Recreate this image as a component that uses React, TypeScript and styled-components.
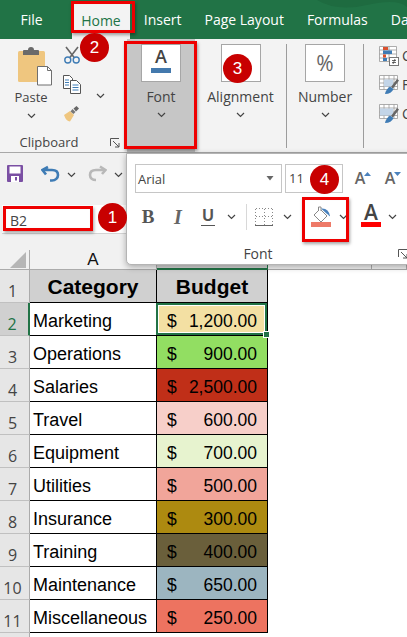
import React from "react";
import styled, { createGlobalStyle } from "styled-components";

const Global = createGlobalStyle`
  html, body { margin: 0; padding: 0; background: #fff; overflow: hidden; }
  * { box-sizing: border-box; }
`;

const UI = `"Open Sans", "Noto Sans", sans-serif`;
const ARIAL = `"Liberation Sans", Arial, sans-serif`;

const Page = styled.div`
  position: relative; width: 407px; height: 637px; overflow: hidden;
  display: flex; flex-direction: column; background: #f1f1f1; font-family: ${UI}; color: #444;
`;
const TabBar = styled.div`
  position: relative; height: 39px; flex: none; display: flex; background: #217346; padding: 0 0 0 9px; overflow: hidden;
`;
const Swoosh = styled.svg`position: absolute; right: 0; top: 0;`;
const Tab = styled.div<{ $active?: boolean }>`
  position: relative; flex: none; padding: ${p => (p.$active ? "0 9px" : "0 11.5px")}; margin: ${p => (p.$active ? "3px 2.5px 0 18px" : "0")};
  line-height: ${p => (p.$active ? "35px" : "40px")}; font-size: 14px; white-space: nowrap;
  color: ${p => (p.$active ? "#217346" : "#fff")}; background: ${p => (p.$active ? "#f3f3f3" : "transparent")};
`;
const Ribbon = styled.div`
  height: 114px; flex: none; display: flex; background: #f3f3f3; border-bottom: 1px solid #a8a8a8; overflow: hidden;
`;
const ClipboardGroup = styled.div`width: 127px; flex: none; display: flex; flex-direction: column;`;
const ClipboardTools = styled.div`display: flex; height: 94px;`;
const PasteCol = styled.div`width: 62px; flex: none; display: flex; flex-direction: column; align-items: center; padding-top: 8px;`;
const PasteLabel = styled.div`font-size: 13px; line-height: 18px; margin-top: 2px;`;
const SmallTools = styled.div`width: 20px; flex: none; display: flex; flex-direction: column; gap: 11px; padding-top: 7px; align-items: center;`;
const MoreChevron = styled.div`margin: 43px 0 0 14px;`;
const GroupFoot = styled.div`
  position: relative; font-size: 13px; line-height: 18px; text-align: center; padding-right: 29px; margin-top: 0;
`;
const FootLauncher = styled.span`position: absolute; right: 7px; top: 5px; line-height: 0;`;
const CollapsedGroup = styled.div<{ $w: number; $active?: boolean }>`
  width: ${p => p.$w}px; flex: none; display: flex; flex-direction: column; align-items: center; padding-top: 5px;
  background: ${p => (p.$active ? "#c6c6c6" : "transparent")};
`;
const IconBox = styled.div`
  width: 40px; height: 38px; background: #fff; border: 1px solid #a6a6a6; display: flex; flex-direction: column; align-items: center;
`;
const BoxLetter = styled.span`font-size: 18px; line-height: 23px; font-weight: 600; color: #444;`;
const BoxBar = styled.span`width: 20px; height: 5px; background: #4479ad;`;
const BoxPercent = styled.span`font-size: 21px; line-height: 36px; color: #666;`;
const GroupLabel = styled.div`font-size: 14px; line-height: 19px; margin-top: 5px; white-space: nowrap;`;
const ChevronSlot = styled.div<{ $mt: number }>`margin-top: ${p => p.$mt}px; line-height: 0;`;
const GroupSep = styled.div`width: 1px; flex: none; margin: 5px 0 4px; background: #9c9c9c;`;
const StylesGroup = styled.div`flex: none; display: flex; flex-direction: column; gap: 9px; padding: 7px 0 0 15px;`;
const StyleRow = styled.div`display: flex; height: 20px; gap: 3px; font-size: 14px; line-height: 20px; white-space: nowrap;`;
const QuickBar = styled.div`height: 52px; flex: none; display: flex; align-items: flex-start; padding: 12px 0 0 7px;`;
const QuickIcon = styled.span<{ $ml: number }>`margin-left: ${p => p.$ml}px; line-height: 0; flex: none;`;
const QuickChevron = styled.span<{ $ml: number }>`margin: 7px 0 0 ${p => p.$ml}px; line-height: 0; flex: none;`;
const NameRow = styled.div`
  height: 29px; flex: none; background: #fff; border-bottom: 1px solid #d4d4d4; margin-left: 2px; padding: 4px 0 0 8px;
  font-size: 14px; line-height: 24px; color: #444;
`;
const HeadGap = styled.div`height: 16px; flex: none;`;
const Sheet = styled.div`
  flex: none; display: grid; grid-template-columns: 30px 127px 111px 104px 1fr; grid-template-rows: 20px repeat(12, 33px);
  background: #fff;
`;
const Corner = styled.div`background: #f1f1f1; border-right: 1px solid #ababab; border-bottom: 1px solid #ababab; padding: 2px 0 0 10px; line-height: 0;`;
const ColHead = styled.div<{ $selected?: boolean }>`
  background: ${p => (p.$selected ? "#d2d2d2" : "#f1f1f1")};
  border-right: 1px solid ${p => (p.$selected ? "#217346" : "#ababab")};
  border-bottom: ${p => (p.$selected ? "2px solid #217346" : "1px solid #ababab")};
  font: 17px/20px ${ARIAL}; color: #111; text-align: center;
`;
const RowHead = styled.div<{ $selected?: boolean }>`
  background: ${p => (p.$selected ? "#d0d0d0" : "#e6e6e6")};
  color: ${p => (p.$selected ? "#217346" : "#444")};
  border-right: ${p => (p.$selected ? "2px solid #217346" : "1px solid #ababab")};
  border-bottom: 1px solid #c0c0c0;
  display: flex; align-items: flex-end; justify-content: center; padding-right: 4px;
  font-size: 16px; line-height: 22px; font-weight: 500;
`;
const CategoryCell = styled.div`
  border-right: 1px solid #000; border-bottom: 1px solid #000; background: #fff; color: #000;
  font: 18px/36px ${ARIAL}; padding-left: 3px; white-space: nowrap;
`;
const TitleCell = styled.div`
  border-right: 1px solid #000; border-bottom: 1px solid #000; background: #d0d0d0; color: #000;
  font: bold 21px/34px ${ARIAL}; text-align: center;
`;
const AmountCell = styled.div<{ $bg: string; $selected?: boolean }>`
  position: relative; display: flex; justify-content: space-between; padding: 0 10px;
  border-right: 1px solid #000; border-bottom: 1px solid #000; background: ${p => p.$bg}; color: #000;
  font: 17.5px/36px ${ARIAL}; white-space: nowrap;
  ${p => p.$selected && "box-shadow: inset 0 0 0 2px #217346, inset 0 0 0 3px #fff; margin: 0 0 0 -1px; padding-left: 11px;"}
`;
const FillHandle = styled.span`
  position: absolute; right: -3px; bottom: -3px; width: 7px; height: 7px; background: #217346; border: 1px solid #fff; z-index: 2;
`;
const EmptyCell = styled.div``;
const Popover = styled.div`
  position: absolute; left: 126px; top: 153px; width: 290px; height: 112px; z-index: 3; background: #fff;
  border: 1px solid #b4b4b4; border-radius: 0 0 0 5px; box-shadow: 0 2px 6px rgba(0,0,0,.3); padding: 10px 0 0 8px;
  display: flex; flex-direction: column;
`;
const FontRow = styled.div`display: flex; gap: 3px; height: 29px; align-items: stretch;`;
const FontSelect = styled.div`
  width: 147px; border: 1px solid #c6c6c6; display: flex; align-items: center; justify-content: space-between;
  padding: 0 6px 0 2px; font: 13px ${UI}; color: #444;
`;
const SizeSelect = styled.div`width: 58px; border: 1px solid #c6c6c6; padding-left: 3px; font-size: 13px; line-height: 27px; color: #444;`;
const GrowBtn = styled.div<{ $ml: number }>`
  position: relative; width: 16px; margin-left: ${p => p.$ml}px; font-size: 16px; line-height: 29px; font-weight: 600; color: #666; text-align: center;
`;
const GrowMark = styled.span`position: absolute; right: -3px; top: 6px; line-height: 0;`;
const ToolRow = styled.div`display: flex; height: 30px; align-items: center; margin-top: 9px;`;
const Tool = styled.div<{ $w: number; $ml?: number; $pb?: number }>`
  width: ${p => p.$w}px; margin-left: ${p => p.$ml ?? 0}px; padding-bottom: ${p => p.$pb ?? 0}px; flex: none;
  display: flex; flex-direction: column; align-items: center; justify-content: center; line-height: 0;
`;
const BoldGlyph = styled.span`font: bold 19px/20px "Liberation Serif", serif; color: #555;`;
const ItalicGlyph = styled.span`font: italic bold 20px/20px "Liberation Serif", serif; color: #666;`;
const UnderGlyph = styled.span`font: bold 16px/18px ${ARIAL}; color: #555; border-bottom: 1.5px solid #555; padding: 0 1px;`;
const ColorLetter = styled.span`font-size: 21px; line-height: 19px; font-weight: 600; color: #444;`;
const ColorBar = styled.span`width: 20px; height: 5px; background: #ff0000;`;
const Divider = styled.div`width: 1px; height: 26px; background: #d8d8d8; margin: 0 4px 0 5px; flex: none;`;
const PopFoot = styled.div`
  position: relative; width: 273px; margin-top: 13px; font-size: 14px; line-height: 20px; text-align: center; padding-right: 27px;
`;
const PopLauncher = styled.span`position: absolute; right: 0; top: 5px; line-height: 0;`;
const Marker = styled.div<{ $x: number; $y: number; $w: number; $h: number }>`
  position: absolute; left: ${p => p.$x}px; top: ${p => p.$y}px; width: ${p => p.$w}px; height: ${p => p.$h}px; z-index: 4;
  border: 3px solid #ee0000; box-shadow: 1px 2px 3px rgba(0,0,0,.35), inset 0 0 1px rgba(0,0,0,.1);
`;
const Badge = styled.div<{ $x: number; $y: number }>`
  position: absolute; left: ${p => p.$x}px; top: ${p => p.$y}px; width: 29px; height: 29px; border-radius: 50%; z-index: 5;
  background: #c80000; color: #fff; font: 17px/29px ${ARIAL}; text-align: center;
`;

const Chevron = () => (
  <svg width="9" height="6" viewBox="0 0 9 6"><path d="M1 1l3.500 3.500L8 1" fill="none" stroke="#444" strokeWidth="1.200" /></svg>
);
const Launcher = () => (
  <svg width="10" height="10" viewBox="0 0 10 10"><path d="M.5 8V.5H9M3 3l6 6M9 5v4H5" fill="none" stroke="#555" strokeWidth="1" /></svg>
);
const PasteIcon = () => (
  <svg width="62" height="39" viewBox="0 0 62 39">
    <rect x="18" y="4" width="27" height="31" rx="1.500" fill="#efc67f" />
    <path d="M23 8V4q0-1 1-1h4q0-3 3-3t3 3h4q1 0 1 1v4z" fill="#6a6a6a" />
    <path d="M37.500 19.500h10l4 4v14.500h-14z" fill="#fff" stroke="#6f6f6f" />
    <path d="M47.500 19.500v4h4" fill="none" stroke="#6f6f6f" />
  </svg>
);
const ScissorsIcon = () => (
  <svg width="18" height="18" viewBox="0 0 18 18">
    <path d="M3 1l8.500 11M15 1L6.500 12" fill="none" stroke="#666" strokeWidth="1.600" />
    <circle cx="4.800" cy="14" r="3" fill="none" stroke="#3f7cb5" strokeWidth="1.400" />
    <circle cx="13.200" cy="14" r="3" fill="none" stroke="#3f7cb5" strokeWidth="1.400" />
  </svg>
);
const CopyIcon = () => (
  <svg width="18" height="19" viewBox="0 0 18 19">
    <path d="M.5.500h6l3 3v10h-9z" fill="#fff" stroke="#555" />
    <path d="M7.500 5.500h6l4 4v9h-10z" fill="#fff" stroke="#555" />
    <path d="M2 5h4M2 7.500h4M2 10h4M9.500 10h6M9.500 12.500h6M9.500 15h6" stroke="#3f7cb5" strokeWidth="1" />
  </svg>
);
const PainterIcon = () => (
  <svg width="18" height="17" viewBox="0 0 18 17">
    <path d="M1 10l6-4 4 4-4 6.500q-4-.5-6-6.500z" fill="#efc67f" />
    <path d="M7.500 6.500l2-2.500 3 3-2 2z" fill="#777" />
    <path d="M10.500 3.500l3-2.500 2.500 2.500-3 3z" fill="#666" />
  </svg>
);
const SaveIcon = () => (
  <svg width="16" height="17" viewBox="0 0 16 17">
    <path d="M0 1q0-1 1-1h14q1 0 1 1v15q0 1-1 1H1q-1 0-1-1z" fill="#7a4fa3" />
    <rect x="2.500" y="1.500" width="11" height="7" fill="#fff" />
    <rect x="4" y="11" width="8" height="6" fill="#fff" />
    <rect x="8" y="12" width="2" height="3.500" fill="#7a4fa3" />
  </svg>
);
const UndoIcon = ({ color }: { color: string }) => (
  <svg width="19" height="17" viewBox="0 0 19 17">
    <path d="M5 9.500L1.500 5 7 2" fill="none" stroke={color} strokeWidth="2.600" />
    <path d="M2 5h9c4 0 6 2 6 5s-2.500 5.500-6 5.500H9" fill="none" stroke={color} strokeWidth="2.600" />
  </svg>
);
const RedoIcon = () => (
  <svg width="19" height="17" viewBox="0 0 19 17" style={{ transform: "scaleX(-1)" }}>
    <path d="M5 9L1.500 5 7 1.500" fill="none" stroke="#b8b8b8" strokeWidth="2.600" />
    <path d="M2 5h9c4 0 6 2 6 5s-2.500 5-6 5" fill="none" stroke="#b8b8b8" strokeWidth="2.600" />
  </svg>
);
const DropArrow = () => (
  <svg width="9" height="5" viewBox="0 0 9 5"><path d="M.5 0h7L4 4.500z" fill="#666" /></svg>
);
const BorderIcon = () => (
  <svg width="18" height="18" viewBox="0 0 18 18" shapeRendering="crispEdges">
    <path d="M.5 .5h17M.5 16.500v-16M17.500 .5v16M9.500 .5v16M.5 8.500h17" fill="none" stroke="#8a8a8a" strokeWidth="1" strokeDasharray="1 2" />
    <path d="M0 17.500h18" stroke="#666" strokeWidth="1" />
  </svg>
);
const FillIcon = () => (
  <svg width="21" height="21" viewBox="0 0 21 21">
    <path d="M9 3l7 7-6 6-7-7z" fill="#fff" stroke="#888" strokeWidth="1" />
    <path d="M7.500 5V1h2.500v4" fill="#fff" stroke="#888" strokeWidth="1" />
    <path d="M10 2.500q4-.5 6.500 2 2.500 3 2.500 5.500-1 .5-1.500-1L15.500 7.500z" fill="#4a82bd" />
    <rect x="0" y="16" width="20" height="5" fill="#ee7a68" />
  </svg>
);
const UpMark = () => <svg width="7" height="4" viewBox="0 0 7 4"><path d="M0 4l3.500-4L7 4z" fill="#4a82bd" /></svg>;
const DownMark = () => <svg width="7" height="4" viewBox="0 0 7 4"><path d="M0 0h7L3.500 4z" fill="#4a82bd" /></svg>;
const CondIcon = () => (
  <svg width="20" height="20" viewBox="0 0 20 20">
    <path d="M.5.500h17v15H.5zM.5 4h17M.5 8h17M.5 12h17M5 .500v15M10 .500v15" fill="#fff" stroke="#999" strokeWidth=".8" />
    <rect x="4" y="1" width="5" height="3" fill="#d9502e" />
    <rect x="4" y="4.500" width="9" height="3.500" fill="#3f7cb5" />
    <rect x="4" y="8.500" width="3" height="3" fill="#d9502e" />
    <rect x="4" y="12" width="4" height="3" fill="#3f7cb5" />
    <rect x="10.500" y="11.500" width="9" height="8" fill="#fff" stroke="#777" />
    <path d="M13 14.500h4M13 16.500h4M16 13l-2 5" stroke="#444" strokeWidth=".8" fill="none" />
  </svg>
);
const TableBrushIcon = ({ solid }: { solid?: boolean }) => (
  <svg width="20" height="20" viewBox="0 0 20 20">
    <path d="M.5.500h18v14H.5zM.5 4h18M.5 8h18M.5 11.500h18M5 .500v14M10 .500v14M15 .500v14" fill="#fff" stroke="#999" strokeWidth=".8" />
    <rect x={solid ? 1 : 5} y="4.500" width={solid ? 13 : 9} height="7" fill="#c3d5e8" />
    <path d="M12 12l6-8 2 1.500-6 8z" fill="#666" />
    <path d="M6 19q1-5 5-7.500l3.500 2.500q-2 5-8.500 5z" fill="#3f7cb5" />
  </svg>
);
const CornerMark = () => <svg width="17" height="17" viewBox="0 0 17 17"><path d="M16 0v16H0z" fill="#b6b6b6" /></svg>;

const rows: [string, string, string, boolean?][] = [
  ["Marketing", "1,200.00", "#f3e0a3", true],
  ["Operations", "900.00", "#92de62"],
  ["Salaries", "2,500.00", "#c02f18"],
  ["Travel", "600.00", "#f7cfc9"],
  ["Equipment", "700.00", "#e7f3cf"],
  ["Utilities", "500.00", "#f1a59a"],
  ["Insurance", "300.00", "#ad8a10"],
  ["Training", "400.00", "#6a5f3b"],
  ["Maintenance", "650.00", "#9cb5c0"],
  ["Miscellaneous", "250.00", "#ed7360"],
];

export default function App() {
  return (
    <Page>
      <Global />
      <TabBar>
        <Swoosh width="90" height="39" viewBox="0 0 90 39"><path d="M0 0q20 12 50 5t40 2V0z" fill="#1e6b40" /></Swoosh>
        <Tab>File</Tab>
        <Tab $active>Home</Tab>
        <Tab>Insert</Tab>
        <Tab>Page Layout</Tab>
        <Tab>Formulas</Tab>
        <Tab>Data</Tab>
      </TabBar>
      <Ribbon>
        <ClipboardGroup>
          <ClipboardTools>
            <PasteCol>
              <PasteIcon />
              <PasteLabel>Paste</PasteLabel>
              <ChevronSlot $mt={7}><Chevron /></ChevronSlot>
            </PasteCol>
            <SmallTools>
              <ScissorsIcon />
              <CopyIcon />
              <PainterIcon />
            </SmallTools>
            <MoreChevron><Chevron /></MoreChevron>
          </ClipboardTools>
          <GroupFoot>Clipboard<FootLauncher><Launcher /></FootLauncher></GroupFoot>
        </ClipboardGroup>
        <CollapsedGroup $w={68} $active>
          <IconBox><BoxLetter>A</BoxLetter><BoxBar /></IconBox>
          <GroupLabel>Font</GroupLabel>
          <ChevronSlot $mt={6}><Chevron /></ChevronSlot>
        </CollapsedGroup>
        <CollapsedGroup $w={91}>
          <IconBox />
          <GroupLabel>Alignment</GroupLabel>
          <ChevronSlot $mt={6}><Chevron /></ChevronSlot>
        </CollapsedGroup>
        <GroupSep />
        <CollapsedGroup $w={76}>
          <IconBox><BoxPercent>%</BoxPercent></IconBox>
          <GroupLabel>Number</GroupLabel>
          <ChevronSlot $mt={6}><Chevron /></ChevronSlot>
        </CollapsedGroup>
        <GroupSep />
        <StylesGroup>
          <StyleRow><CondIcon />Conditional Formatting</StyleRow>
          <StyleRow><TableBrushIcon />Format as Table</StyleRow>
          <StyleRow><TableBrushIcon solid />Cell Styles</StyleRow>
        </StylesGroup>
      </Ribbon>
      <QuickBar>
        <SaveIcon />
        <QuickIcon $ml={18}><UndoIcon color="#3f7cb5" /></QuickIcon>
        <QuickChevron $ml={7}><Chevron /></QuickChevron>
        <QuickIcon $ml={12}><RedoIcon /></QuickIcon>
        <QuickChevron $ml={7}><Chevron /></QuickChevron>
      </QuickBar>
      <NameRow>B2</NameRow>
      <HeadGap />
      <Sheet>
        <Corner><CornerMark /></Corner>
        <ColHead>A</ColHead>
        <ColHead $selected />
        <ColHead />
        <ColHead />
        <RowHead>1</RowHead>
        <TitleCell>Category</TitleCell>
        <TitleCell>Budget</TitleCell>
        <EmptyCell />
        <EmptyCell />
        {rows.map(([name, amount, bg, selected], i) => (
          <React.Fragment key={name}>
            <RowHead $selected={selected}>{i + 2}</RowHead>
            <CategoryCell>{name}</CategoryCell>
            <AmountCell $bg={bg} $selected={selected}>
              <span>$</span><span>{amount}</span>
              {selected && <FillHandle />}
            </AmountCell>
            <EmptyCell />
            <EmptyCell />
          </React.Fragment>
        ))}
        <RowHead />
      </Sheet>
      <Popover>
        <FontRow>
          <FontSelect>Arial<DropArrow /></FontSelect>
          <SizeSelect>11</SizeSelect>
          <GrowBtn $ml={6}>A<GrowMark><UpMark /></GrowMark></GrowBtn>
          <GrowBtn $ml={11}>A<GrowMark><DownMark /></GrowMark></GrowBtn>
        </FontRow>
        <ToolRow>
          <Tool $w={26}><BoldGlyph>B</BoldGlyph></Tool>
          <Tool $w={34}><ItalicGlyph>I</ItalicGlyph></Tool>
          <Tool $w={26}><UnderGlyph>U</UnderGlyph></Tool>
          <Tool $w={20}><Chevron /></Tool>
          <Divider />
          <Tool $w={26}><BorderIcon /></Tool>
          <Tool $w={20}><Chevron /></Tool>
          <Tool $w={34} $ml={7}><FillIcon /></Tool>
          <Tool $w={10}><Chevron /></Tool>
          <Tool $w={30} $ml={8} $pb={4}><ColorLetter>A</ColorLetter><ColorBar /></Tool>
          <Tool $w={12}><Chevron /></Tool>
        </ToolRow>
        <PopFoot>Font<PopLauncher><Launcher /></PopLauncher></PopFoot>
      </Popover>
      <Marker $x={71} $y={1} $w={64} $h={32} />
      <Marker $x={124} $y={41} $w={73} $h={108} />
      <Marker $x={3} $y={206} $w={90} $h={25} />
      <Marker $x={302} $y={197} $w={47} $h={45} />
      <Badge $x={80} $y={33}>2</Badge>
      <Badge $x={223} $y={54}>3</Badge>
      <Badge $x={98} $y={203}>1</Badge>
      <Badge $x={310} $y={165}>4</Badge>
    </Page>
  );
}
